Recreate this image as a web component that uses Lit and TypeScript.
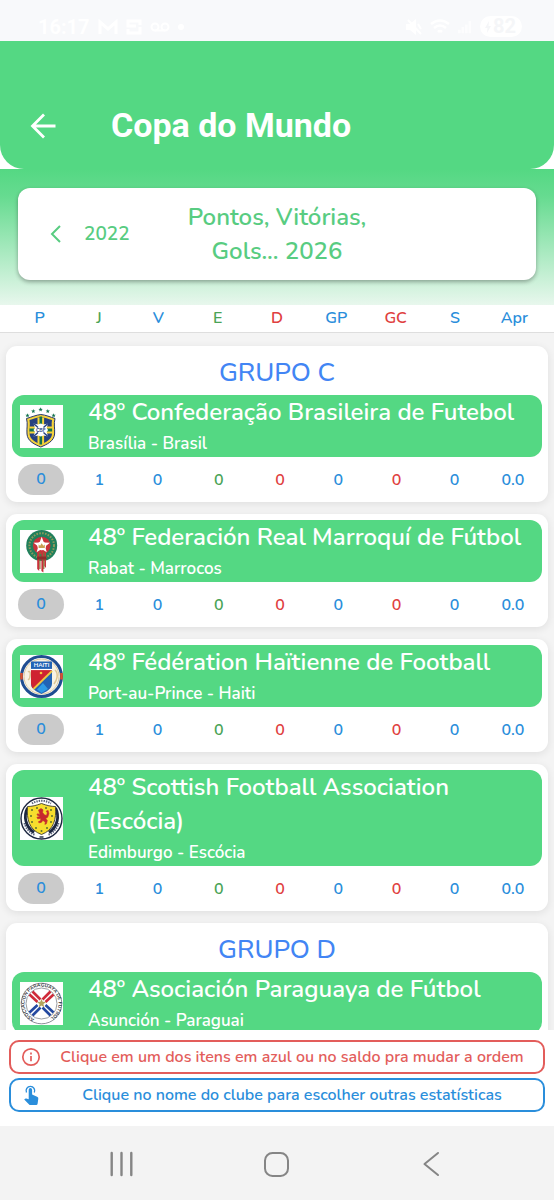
import { LitElement, html, svg, css, nothing, type TemplateResult } from "lit";
import { customElement, property } from "lit/decorators.js";

interface Club {
  name: string;
  place: string;
  crest: string;
  group?: string;
}

interface Column {
  key: string;
  tone: string;
  value: string;
  valueTone: string;
}

const COLUMNS: Column[] = [
  { key: "P", tone: "blue", value: "0", valueTone: "blue" },
  { key: "J", tone: "green", value: "1", valueTone: "blue" },
  { key: "V", tone: "blue", value: "0", valueTone: "blue" },
  { key: "E", tone: "green", value: "0", valueTone: "green" },
  { key: "D", tone: "red", value: "0", valueTone: "red" },
  { key: "GP", tone: "blue", value: "0", valueTone: "blue" },
  { key: "GC", tone: "red", value: "0", valueTone: "red" },
  { key: "S", tone: "blue", value: "0", valueTone: "blue" },
  { key: "Apr", tone: "blue", value: "0.0", valueTone: "blue" },
];

const CLUBS: Club[] = [
  { group: "GRUPO C", name: "Confederação Brasileira de Futebol", place: "Brasília - Brasil", crest: "brasil" },
  { name: "Federación Real Marroquí de Fútbol", place: "Rabat - Marrocos", crest: "marrocos" },
  { name: "Fédération Haïtienne de Football", place: "Port-au-Prince - Haiti", crest: "haiti" },
  { name: "Scottish Football Association (Escócia)", place: "Edimburgo - Escócia", crest: "escocia" },
  { group: "GRUPO D", name: "Asociación Paraguaya de Fútbol", place: "Asunción - Paraguai", crest: "paraguai" },
];

const star = (x: number, y: number, r: number, fill: string) => {
  const points = Array.from({ length: 10 }, (_, i) => {
    const a = (Math.PI / 5) * i - Math.PI / 2;
    const d = i % 2 ? r * 0.42 : r;
    return `${(x + d * Math.cos(a)).toFixed(2)},${(y + d * Math.sin(a)).toFixed(2)}`;
  }).join(" ");
  return svg`<polygon points=${points} fill=${fill}></polygon>`;
};

const CRESTS: Record<string, TemplateResult> = {
  brasil: svg`
    ${star(7.5, 10.5, 2.3, "#14734f")}${star(13.3, 6.2, 2.3, "#14734f")}${star(20.6, 4.6, 2.3, "#14734f")}
    ${star(27.8, 6.2, 2.3, "#14734f")}${star(33.6, 10.5, 2.3, "#14734f")}
    <path d="M20.800 9.500C16 10 12 12 6.500 13.500C8 19 6.500 23 7 29C7.500 36.500 15 39.500 20.800 42C26.500 39.500 34 36.500 34.600 29C35 23 33.500 19 35 13.500C30 12 26 10 20.800 9.500Z" fill="#f5d33c" stroke="#26366b" stroke-width="1"></path>
    <path d="M20.800 12C17 12.500 13 14 9.500 15C10.500 20 9 24 9.600 29C10 34.500 16 37.500 20.800 39.500C25.600 37.500 31.600 34.500 32 29C32.500 24 31 20 32 15C28.500 14 24.600 12.500 20.800 12Z" fill="#26407f"></path>
    <path d="M17.500 12.500h6.600v26l-3.300 1.500l-3.300-1.500ZM9.500 21.500h22.600v7H9.500Z" fill="#f5d33c"></path>
    <path d="M19.500 11.500h2.600v28h-2.600ZM9.500 23.500h22.600v3H9.500Z" fill="#14734f"></path>
    <path d="M13.500 18.500l4.500 1l2.800-1l2.800 1l4.500-1l-1.500 4.500l1.500 2l-1.500 2l1.500 4.500l-4.500-1l-2.800 1l-2.800-1l-4.500 1l1.500-4.500l-1.500-2l1.500-2Z" fill="#fff"></path>
    <path d="M13.500 18.500l4.500 4M28 18.500l-4.500 4M13.500 31.500l4.500-4M28 31.500l-4.500-4" stroke="#26407f" stroke-width="1.400"></path>
    <text x="20.800" y="26.800" font-size="5" font-weight="700" text-anchor="middle" fill="#26407f">CBF</text>`,
  marrocos: svg`
    <circle cx="21.700" cy="15.500" r="15.500" fill="#21805c"></circle>
    <circle cx="21.700" cy="15.500" r="12.300" fill="none" stroke="#8f9a5c" stroke-width="2" stroke-dasharray="1.600 1.300"></circle>
    <circle cx="21.700" cy="15.500" r="8.800" fill="#c9323b"></circle>
    ${star(21.7, 15.3, 8.6, "#fff")}
    <circle cx="21.700" cy="15.800" r="4.400" fill="#fff"></circle>
    <path d="M18.600 18v-3.400l1.500 1.200l1.600-2.600l1.600 2.600l1.500-1.200v3.400Z" fill="#c9a052"></path>
    <path d="M17.200 22v17l2 2V22ZM21.400 22v19l2 1.400V22ZM24.300 22v14l1.700 2V22Z" fill="#c9323b"></path>
    <path d="M19.900 22v17M23.800 22v17" stroke="#8b6d35" stroke-width="1.200"></path>
    <path d="M17 26.500h9.500v3H17Z" fill="#8c2c2c"></path>`,
  haiti: svg`
    <circle cx="21.500" cy="21.500" r="20" fill="#fff" stroke="#204d91" stroke-width="3"></circle>
    <path d="M1.500 18v6.500M41.500 18v6.500" fill="none" stroke="#d9522f" stroke-width="2.600"></path>
    <circle cx="21.500" cy="21.500" r="17.500" fill="#f8f2e4" stroke="#d3bd8c" stroke-width=".8"></circle>
    <path d="M8 17c3-3 3 6 0 8M35 15c4 4 2 10-1 14" fill="none" stroke="#dcc695" stroke-width="1.500"></path>
    <path d="M11 6.500h21v22c0 6-6 8-10.500 10.500C17 36.500 11 34.500 11 28.500Z" fill="#2263b5"></path>
    <path d="M11 15h21L13.500 34Q11 32 11 28.500Z" fill="#cf2231"></path>
    <path d="M17 34.500l6-6.500l5 6l-6.500 4Z" fill="#2e9be6"></path>
    <path d="M13.500 34L32 16" stroke="#f2c63d" stroke-width="1.800"></path>
    <path d="M11 14.500h21" stroke="#fff" stroke-width="1.200"></path>
    <text x="21.500" y="12.300" font-size="5.800" font-weight="700" text-anchor="middle" fill="#fff">HAITI</text>
    <circle cx="21" cy="18" r="1.300" fill="#f2c63d"></circle>`,
  escocia: svg`
    <circle cx="21.500" cy="21.500" r="20.500" fill="#fff" stroke="#1d2740" stroke-width="1.400"></circle>
    <path d="M12 6.500A17.800 17.800 0 0 1 31 6.500M4.500 26A17.800 17.800 0 0 0 15 38M38.500 26A17.800 17.800 0 0 1 28 38" fill="none" stroke="#59627a" stroke-width="2" stroke-dasharray="1.400 1"></path>
    <path d="M7.500 11C3.500 19 5 29 14 35.500M35.500 11c4 8 2.500 18-6.500 24.500" fill="none" stroke="#1d2740" stroke-width="2.800"></path>
    <path d="M7.500 9.500C12 9.500 16 8.500 21.500 6.500C27 8.500 31 9.500 35.500 9.500C36.500 22 34 33 21.500 37.500C9 33 6.500 22 7.500 9.500Z" fill="#f6dd2d" stroke="#403d2c" stroke-width=".9"></path>
    <g fill="#58702e"><circle cx="12" cy="13" r="1"></circle><circle cx="17" cy="11" r="1"></circle><circle cx="26" cy="11" r="1"></circle><circle cx="31" cy="13" r="1"></circle><circle cx="11" cy="19" r="1"></circle><circle cx="12" cy="25" r="1"></circle><circle cx="32" cy="19" r="1"></circle><circle cx="31" cy="25" r="1"></circle><circle cx="16" cy="31" r="1"></circle><circle cx="27" cy="31" r="1"></circle><circle cx="21.500" cy="34" r="1"></circle></g>
    <path d="M18.500 13l2.500-1.500l2 1.300l-.4 2.600l1.700 2.400l2.200.8l.8-2.800l-1.200-1.600l2-.8l.8 3.200l-1.200 3.600l-2 1.200l1.600 2l-.8 3.200l-1.600.8l.4-2.400l-2.400-1.600l-1.600 2l-2.400.4l-.4-1.200l2-.8l.4-2.400l-3.200.4l-.8-1.600l3.200-.7l-3.200-1.600l.7-1.200l2.500 1Z" fill="#c7282d" stroke="#c7282d" stroke-width=".6"></path>
    <path d="M19.500 40h4" stroke="#1d2740" stroke-width="1.400"></path>`,
  paraguai: svg`
    <defs><path id="arc" d="M14.500 37A17 17 0 1 1 26.500 37.800"></path></defs>
    <circle cx="21.500" cy="21.500" r="20.300" fill="#fff" stroke="#70747c" stroke-width=".8"></circle>
    <circle cx="21.500" cy="21.500" r="15.500" fill="#fff" stroke="#70747c" stroke-width=".7"></circle>
    <text font-size="4.800" font-weight="700" fill="#35383f"><textPath href="#arc">ASOCIACION PARAGUAYA DE FUTBOL</textPath></text>
    <path d="M9.500 12.500l8 7.500M12.500 9.500l8 8M33.500 12.500l-8 7.500M30.500 9.500l-8 8" stroke="#cf2b3a" stroke-width="2.600"></path>
    <path d="M9.500 30.500l8-7.500M12.500 33.500l8-8M33.500 30.500l-8-7.500M30.500 33.500l-8-8" stroke="#2449a0" stroke-width="2.600"></path>
    ${star(21.5, 21.5, 4.8, "#b3a45c")}`,
};

@customElement("club-card")
export class ClubCard extends LitElement {
  @property({ attribute: false }) club!: Club;

  static styles = css`
    :host {
      display: block;
      padding: 6px;
      border-radius: 11px;
      background: #fff;
      box-shadow: 0 2px 8px rgba(0, 0, 0, 0.09);
    }
    .group {
      margin: 0;
      height: 43px;
      line-height: 42px;
      font-size: 26px;
      font-weight: 500;
      text-align: center;
      color: #4285f4;
    }
    .banner {
      display: flex;
      align-items: center;
      gap: 25px;
      width: 100%;
      padding: 0 8px;
      border: 0;
      border-radius: 12px;
      background: #54d883;
      color: #fff;
      font: inherit;
      text-align: left;
      cursor: pointer;
    }
    .crest {
      flex: none;
      width: 43px;
      height: 43px;
      background: #fff;
    }
    .names {
      display: flex;
      flex-direction: column;
      min-width: 0;
    }
    .name {
      font-size: 24px;
      font-weight: 600;
      line-height: 34px;
    }
    .place {
      height: 28px;
      font-size: 17px;
      font-weight: 600;
      line-height: 29px;
    }
    .stats {
      width: 100%;
      table-layout: fixed;
      border-collapse: collapse;
      font-size: 16px;
      font-weight: 600;
    }
    .cell {
      height: 31px;
      padding: 7px 0 1px;
      text-align: center;
      width: 58px;
    }
    .wide {
      width: 64px;
    }
    .pill {
      display: block;
      margin: 0 6px;
      border-radius: 16px;
      background: #cbcbcb;
      line-height: 31px;
    }
    .blue {
      color: #2a8edb;
    }
    .green {
      color: #4ba457;
    }
    .red {
      color: #e0413f;
    }
  `;

  render() {
    const { club } = this;
    return html`
      ${club.group ? html`<h2 class="group">${club.group}</h2>` : nothing}
      <button class="banner" type="button">
        <svg class="crest" viewBox="0 0 43 43" aria-hidden="true">${CRESTS[club.crest]}</svg>
        <span class="names">
          <span class="name">48º ${club.name}</span>
          <span class="place">${club.place}</span>
        </span>
      </button>
      <table class="stats" aria-label=${club.name}>
        <tbody>
          <tr>
            ${COLUMNS.map(
              (c, i) => html`<td class="cell ${c.valueTone} ${i === 3 ? "wide" : ""}">
                ${i === 0 ? html`<span class="pill">${c.value}</span>` : c.value}
              </td>`,
            )}
          </tr>
        </tbody>
      </table>
    `;
  }
}

@customElement("app-root")
export class AppRoot extends LitElement {
  static styles = css`
    :host {
      display: flex;
      flex-direction: column;
      height: 100vh;
      overflow: hidden;
      background: #fff;
      font-family: Nunito, Lato, "Open Sans", sans-serif;
    }
    button {
      border: 0;
      padding: 0;
      background: none;
      font: inherit;
      color: inherit;
      cursor: pointer;
    }
    svg {
      display: block;
      flex: none;
    }
    .status {
      flex: none;
      display: flex;
      align-items: center;
      justify-content: space-between;
      height: 41px;
      box-sizing: border-box;
      padding: 12px 32px 0 38px;
      background: #f8f9fb;
      color: #fff;
      font: 700 20px/24px Roboto, sans-serif;
    }
    .cluster {
      display: flex;
      align-items: center;
      gap: 8px;
    }
    .battery {
      display: flex;
      align-items: center;
      gap: 2px;
      padding: 0 6px 0 5px;
      border-radius: 11px;
      background: #fff;
      color: #f5f6f8;
      line-height: 21px;
    }
    .top {
      flex: none;
      display: flex;
      align-items: center;
      gap: 52px;
      height: 128px;
      box-sizing: border-box;
      padding: 40px 27px 0;
      border-radius: 0 0 24px 24px;
      background: #54d883;
      color: #fff;
    }
    .title {
      margin: 0;
      font: 700 34px/40px Roboto, sans-serif;
    }
    .season {
      flex: none;
      padding: 19px 18px 25px;
      background: linear-gradient(#54d883 0%, #66db90 20%, #e8f7ed 100%);
    }
    .picker {
      display: grid;
      grid-template-columns: 1fr 200px 1fr;
      align-items: center;
      padding: 12px 0;
      border-radius: 12px;
      background: #fff;
      color: #58cc81;
      box-shadow: 0 2px 4px rgba(0, 0, 0, 0.32);
    }
    .previous {
      display: flex;
      align-items: center;
      gap: 22px;
      padding-left: 31px;
      font-size: 19px;
      font-weight: 600;
    }
    .heading {
      margin: 0;
      font-size: 24px;
      line-height: 34px;
      font-weight: 600;
      text-align: center;
    }
    .columns {
      flex: none;
      display: grid;
      grid-template-columns: repeat(9, 1fr);
      height: 27px;
      padding: 0 10px;
      border-bottom: 1px solid #dedede;
      font-size: 16px;
      font-weight: 600;
      line-height: 27px;
    }
    .list {
      flex: 1;
      min-height: 0;
      overflow: hidden;
      display: flex;
      flex-direction: column;
      gap: 12px;
      padding: 13px 6px 0;
      background: #f4f4f4;
    }
    .card {
      flex: none;
    }
    .hints {
      flex: none;
      display: flex;
      flex-direction: column;
      gap: 4px;
      padding: 10px 9px 14px;
      background: #fff;
    }
    .hint {
      display: flex;
      align-items: center;
      height: 34px;
      box-sizing: border-box;
      padding: 0 10px;
      border: 2px solid currentColor;
      border-radius: 10px;
      font-size: 16px;
      font-weight: 600;
    }
    .message {
      flex: 1;
      padding-left: 10px;
      margin: 0;
      text-align: center;
    }
    .system {
      flex: none;
      display: flex;
      align-items: center;
      justify-content: space-between;
      height: 74px;
      padding: 0 107px;
      background: #f3f3f3;
      color: #858585;
    }
    .blue {
      color: #2a8edb;
    }
    .green {
      color: #4ba457;
    }
    .red {
      color: #e0413f;
    }
    .coral {
      color: #e35d5b;
    }
  `;

  render() {
    return html`
      <div class="status">
        <div class="cluster">
          <span>16:17</span>
          <svg width="20" height="16" viewBox="0 0 20 16" fill="none" stroke="#fff" stroke-width="3" aria-hidden="true">
            <path d="M2 15V3l8 7l8-7v12"></path>
          </svg>
          <svg width="16" height="16" viewBox="0 0 16 16" fill="none" stroke="#fff" stroke-width="3" aria-hidden="true">
            <path d="M14 6V2H2v5h8M2 10v4h12V8"></path>
          </svg>
          <svg width="20" height="12" viewBox="0 0 20 12" fill="none" stroke="#fff" stroke-width="2" aria-hidden="true">
            <circle cx="5" cy="6" r="3.500"></circle><circle cx="15" cy="6" r="3.500"></circle><path d="M5 9.500h10"></path>
          </svg>
          <svg width="16" height="8" viewBox="0 0 16 8" fill="#fff" aria-hidden="true"><circle cx="3" cy="4" r="3"></circle></svg>
        </div>
        <div class="cluster">
          <svg width="16" height="16" viewBox="0 0 16 16" fill="#fff" aria-hidden="true">
            <path d="M0 5h4l6-5v16l-6-5H0Z"></path><path d="M2 1l13 14M12 5l3 5" stroke="#fff" stroke-width="2"></path>
          </svg>
          <svg width="20" height="16" viewBox="0 0 20 16" fill="none" stroke="#fff" stroke-width="2.500" aria-hidden="true">
            <path d="M1 5q9-7 18 0M4 9q6-5 12 0M8 13q2-2 4 0"></path>
          </svg>
          <svg width="14" height="14" viewBox="0 0 16 14" fill="#fff" aria-hidden="true">
            <path d="M0 10h3v4H0ZM4 7h3v7H4ZM8 4h3v10H8ZM12 0h3v14h-3Z" opacity=".7"></path>
          </svg>
          <span class="battery">
            <svg width="6" height="12" viewBox="0 0 6 12" fill="currentColor" aria-hidden="true"><path d="M4 0L0 7h2.500L2 12l4-7H3.500Z"></path></svg>
            82
          </span>
        </div>
      </div>

      <header class="top">
        <button type="button" aria-label="Voltar">
          <svg width="32" height="32" viewBox="0 0 32 32" fill="none" stroke="currentColor" stroke-width="2.800">
            <path d="M28.500 17H6M17 5.500L5.500 17L17 28.500"></path>
          </svg>
        </button>
        <h1 class="title">Copa do Mundo</h1>
      </header>

      <section class="season">
        <div class="picker">
          <button class="previous" type="button">
            <svg width="13" height="18" viewBox="0 0 13 18" fill="none" stroke="currentColor" stroke-width="2">
              <path d="M11 1L3 9l8 8"></path>
            </svg>
            <span>2022</span>
          </button>
          <h2 class="heading">Pontos, Vitórias, Gols... 2026</h2>
        </div>
      </section>

      <nav class="columns" aria-label="Ordenar">
        ${COLUMNS.map((c) => html`<button type="button" class=${c.tone}>${c.key}</button>`)}
      </nav>

      <main class="list">
        ${CLUBS.map((club) => html`<club-card class="card" .club=${club}></club-card>`)}
      </main>

      <footer class="hints">
        <div class="hint coral">
          <svg width="20" height="20" viewBox="0 0 20 20" fill="none" stroke="currentColor" stroke-width="1.700" aria-hidden="true">
            <circle cx="10" cy="10" r="8.200"></circle>
            <path d="M10 9v5.300M10 5.600v1.900"></path>
          </svg>
          <p class="message">Clique em um dos itens em azul ou no saldo pra mudar a ordem</p>
        </div>
        <div class="hint blue">
          <svg width="20" height="20" viewBox="0 0 20 20" aria-hidden="true">
            <path d="M5.500 7.500A4.300 4.300 0 1 1 13.300 7.500" fill="none" stroke="currentColor" stroke-width="1.400"></path>
            <path d="M7.700 4.700a1.700 1.700 0 0 1 3.400 0v4.800l5 2.200q1.400.7 1.200 2.100l-.7 5q-.2 1.200-1.400 1.200H9.300q-.7 0-1.200-.5L3.200 14.600l.9-.8q.5-.4 1.200-.2l2.400.6Z" fill="currentColor"></path>
          </svg>
          <p class="message">Clique no nome do clube para escolher outras estatísticas</p>
        </div>
      </footer>

      <nav class="system" aria-label="Sistema">
        <button type="button" aria-label="Recentes">
          <svg width="28" height="28" viewBox="0 0 28 28" fill="none" stroke="currentColor" stroke-width="2.400" stroke-linecap="round">
            <path d="M4.700 4v22M14.500 4v22M24.300 4v22"></path>
          </svg>
        </button>
        <button type="button" aria-label="Início">
          <svg width="28" height="28" viewBox="0 0 28 28" fill="none" stroke="currentColor" stroke-width="2">
            <rect x="2" y="4" width="23" height="23" rx="7.500"></rect>
          </svg>
        </button>
        <button type="button" aria-label="Voltar">
          <svg width="28" height="28" viewBox="0 0 28 28" fill="none" stroke="currentColor" stroke-width="2" stroke-linecap="round" stroke-linejoin="round">
            <path d="M19 4L5.500 15L19 26"></path>
          </svg>
        </button>
      </nav>
    `;
  }
}
